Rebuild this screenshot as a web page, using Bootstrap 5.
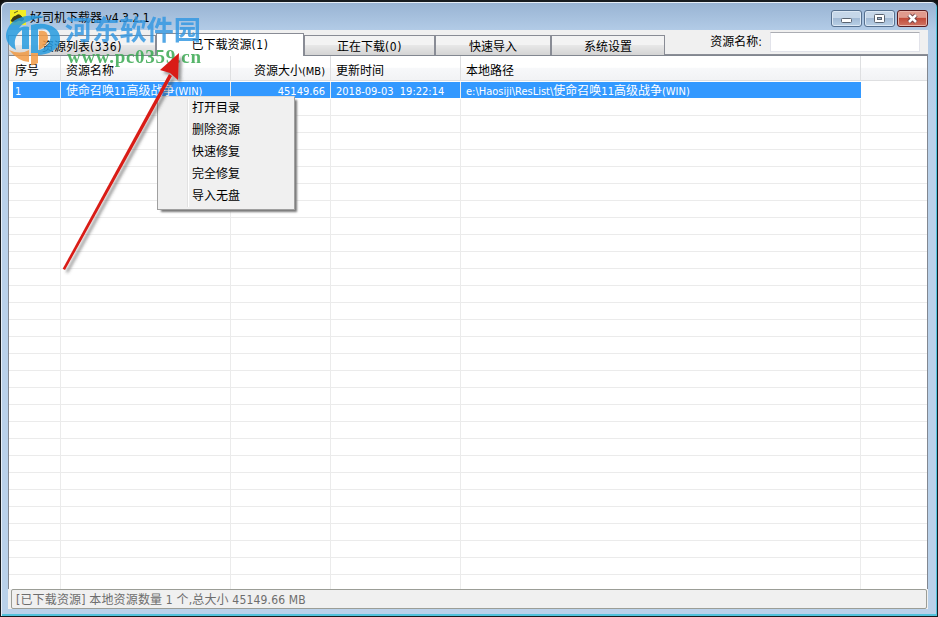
<!DOCTYPE html>
<html lang="zh-CN">
<head>
<meta charset="utf-8">
<title>好司机下载器 v4.3.2.1</title>
<link href="https://cdn.jsdelivr.net/npm/bootstrap@5.3.0/dist/css/bootstrap.min.css" rel="stylesheet">
<style>
body{width:938px;height:617px;overflow:hidden;background:#111;font:12px/17px "DejaVu Sans Condensed","Noto Sans CJK SC",sans-serif;color:#000}
.win{width:938px;height:617px;border:1px solid #181c20;border-top-width:2px;border-radius:7px 7px 0 0;background:linear-gradient(#98b3d3,#b3cce7 29px,#b9d1ea 110px);box-shadow:inset 1px 1px 0 #e6eef7,inset -1px -2px 0 #52c3dc;padding:0 9px 7px 7px}
.titlebar{height:28px;flex:none;padding:8px 0 0 22px;font-size:12px}
.caption-btns{gap:2px}
.cap{width:31px;height:17px;padding:0;border:1px solid #56708f;border-radius:3px;background:linear-gradient(#c6d7e9 45%,#a2bad5 50%,#b9d0e6);box-shadow:inset 0 0 0 1px #dce8f4}
.cap.shut{border-color:#5a1c20;background:linear-gradient(#e09a8d 42%,#c24c3a 50%,#cf7464);box-shadow:inset 0 0 0 1px #e9b4a9}
.client{background:#f0f0f0;height:579px}
.tabs{height:25px;flex:none;border-bottom:1px solid #8b8e96}
.tb{height:20px;margin-top:5px;border:1px solid #898c95;border-width:1px 1px 0 1px;background:linear-gradient(#f3f3f3 45%,#e7e7e7 50%,#d4d4d4);padding:3px 0 0;text-align:center;white-space:nowrap}
.tb.on{height:23px;margin-top:3px;background:#fff;margin-bottom:-1px;position:relative}
.tb i{font-style:normal;letter-spacing:.6px}
.search{width:150px;height:20px;border:1px solid #e2e3ea;border-top-color:#abadb3;background:#fff;border-radius:0;padding:0 4px;margin:2px 8px 0 8px}
.list{height:534px;flex:none;background:#fff;border:1px solid #828790;border-bottom:0;overflow:hidden}
.rowline{display:grid;grid-template-columns:52px 170px 100px 130px 400px 1fr;height:17px;white-space:pre}
.rowline>div{border-right:1px solid #ebebeb;border-bottom:1px solid #ebebeb;padding:0 5px;line-height:17px}
.rowline>div:first-child{padding-left:6px}
.rowline>div:last-child{border-right:0}
.rowline.hd{height:25px;background:linear-gradient(#fff 45%,#f7f8fa 50%,#f1f2f4)}
.rowline.hd>div{line-height:30px;height:25px;border-color:#dedfe1}
.rowline.sel{margin-top:1px}
.rowline.sel>div{border-bottom:0;color:#fff;height:16px}
.rowline.sel>div:not(:last-child){background:#3399ff;line-height:19px}
.rowline.sel>div:first-child{margin-left:4px;padding-left:2px}
.rowline.sel>div:nth-child(5){border-right-color:#39f}
.rowline i{font-style:normal;font-size:11px}
.status{height:20px;margin:0 1px 0 3px;border:1px solid #9b9d96;border-radius:2px;color:#6d6d6d;padding-left:4px;line-height:20px;white-space:pre;letter-spacing:.17px}
.ctx{left:157px;top:96px;width:138px;height:114px;background:#f0f0f0;border:1px solid #a0a0a0;border-top-color:#ddd;box-shadow:3px 3px 2px -1px #777}
.ctx::before{content:"";position:absolute;left:29px;top:2px;bottom:2px;border-left:1px solid #e2e2e2;border-right:1px solid #fff}
.ctx div{height:22px;line-height:22px;padding-left:34px}
.overlay{left:0;top:0;pointer-events:none}
</style>
</head>
<body>
<div class="win d-flex flex-column">
  <div class="titlebar d-flex justify-content-between"><span>好司机下载器 v4.3.2.1</span>
    <div class="caption-btns d-flex">
      <button class="cap"><svg class="d-block mx-auto" width="29" height="15"><rect x="9.5" y="7.5" width="10" height="4" rx="1" fill="#fff" stroke="#596370"/></svg></button>
      <button class="cap"><svg class="d-block mx-auto" width="29" height="15"><rect x="9.5" y="3.5" width="10" height="8" rx="1" fill="#fff" stroke="#596370"/><rect x="12.5" y="6.5" width="4" height="2" fill="#9fb5cd" stroke="#596370"/></svg></button>
      <button class="cap shut"><svg class="d-block mx-auto" width="29" height="15"><path d="M11 4L18 11M18 4L11 11" stroke="#683b40" stroke-width="4.5"/><path d="M11 4L18 11M18 4L11 11" stroke="#fff" stroke-width="2.6"/></svg></button>
    </div>
  </div>
  <div class="client d-flex flex-column">
    <div class="tabs d-flex">
      <div class="tb" style="width:148px">资源列表<i>(336)</i></div>
      <div class="tb on" style="width:148px">已下载资源<i>(1)</i></div>
      <div class="tb" style="width:131px">正在下载<i>(0)</i></div>
      <div class="tb" style="width:116px">快速导入</div>
      <div class="tb" style="width:114px">系统设置</div>
      <label class="ms-auto pt-1" for="q" style="line-height:16px">资源名称:</label><input id="q" class="search" type="text">
    </div>
    <div class="list" id="list">
      <div class="rowline hd"><div>序号</div><div>资源名称</div><div class="text-end">资源大小<i>(MB)</i></div><div>更新时间</div><div>本地路径</div><div></div></div>
      <div class="rowline sel"><div><i>1</i></div><div>使命召唤<i>11</i>高级战争<i>(WIN)</i></div><div class="text-end"><i>45149.66</i></div><div><i>2018-09-03  19:22:14</i></div><div><i>e:\Haosiji\ResList\</i>使命召唤<i>11</i>高级战争<i>(WIN)</i></div><div></div></div>
    </div>
    <div class="status">[已下载资源] 本地资源数量 1 个,总大小 45149.66 MB</div>
  </div>
</div>
<div class="ctx position-absolute"><div>打开目录</div><div>删除资源</div><div>快速修复</div><div>完全修复</div><div>导入无盘</div></div>
<svg class="overlay position-absolute" width="310" height="290">
  <defs><filter id="sh" x="-20%" y="-20%" width="150%" height="150%"><feDropShadow dx="3" dy="3" stdDeviation="1.5" flood-color="#444" flood-opacity=".55"/></filter></defs>
  <rect x="10" y="10" width="16" height="15" fill="#f3ed25"/>
  <path d="M11 21q2-5 5-5q3-3 6 1l2 2-2 2-3-1-4 2zM14 13l4-2" fill="#3c3d19" stroke="#3c3d19" stroke-width=".8"/>
  <g opacity=".84">
    <path d="M45 17C27 13 13 18 8 28C3 38 8 46 16 50C13 41 16 34 22 30V49H29V27C25 26 22 27 19 28C24 21 34 19 45 17Z" fill="#249adf"/>
    <path d="M31 25C48 21 61 28 60 40C59 50 48 55 38 55V50C48 49 53 38 49 32C46 28 43 28 38 29V53H31Z" fill="#249adf"/>
    <path d="M9 50Q20 55 29 50V62Q19 62 9 50Z" fill="#f29a43"/>
    <path d="M31 53H38V63Q33 66 31 65Z" fill="#f29a43"/>
    <path d="M39 31Q48 29 48 38Q47 46 39 50Z" fill="#f29a43"/>
    <text x="65" y="40" font-family="Noto Sans CJK SC" font-weight="700" font-size="27" textLength="136" lengthAdjust="spacingAndGlyphs" fill="#3498e2">河东软件园</text>
    <text x="67" y="63" font-family="Liberation Serif" font-weight="700" font-size="19" textLength="134" lengthAdjust="spacing" fill="#37a84f">www.pc0359.cn</text>
  </g>
  <g filter="url(#sh)" fill="#d91d18"><path d="M62.7 268.8L65 270 172 76 169 74Z"/><path d="M179 53L160 70 170 73 178 80Z"/></g>
</svg>
<script>
  // Empty grid rows below the selected record
  const list = document.getElementById('list');
  for (let i = 0; i < 29; i++) {
    const r = document.createElement('div');
    r.className = 'rowline';
    r.innerHTML = '<div></div>'.repeat(6);
    list.append(r);
  }
</script>
<script src="https://cdn.jsdelivr.net/npm/bootstrap@5.3.0/dist/js/bootstrap.bundle.min.js"></script>
</body>
</html>
